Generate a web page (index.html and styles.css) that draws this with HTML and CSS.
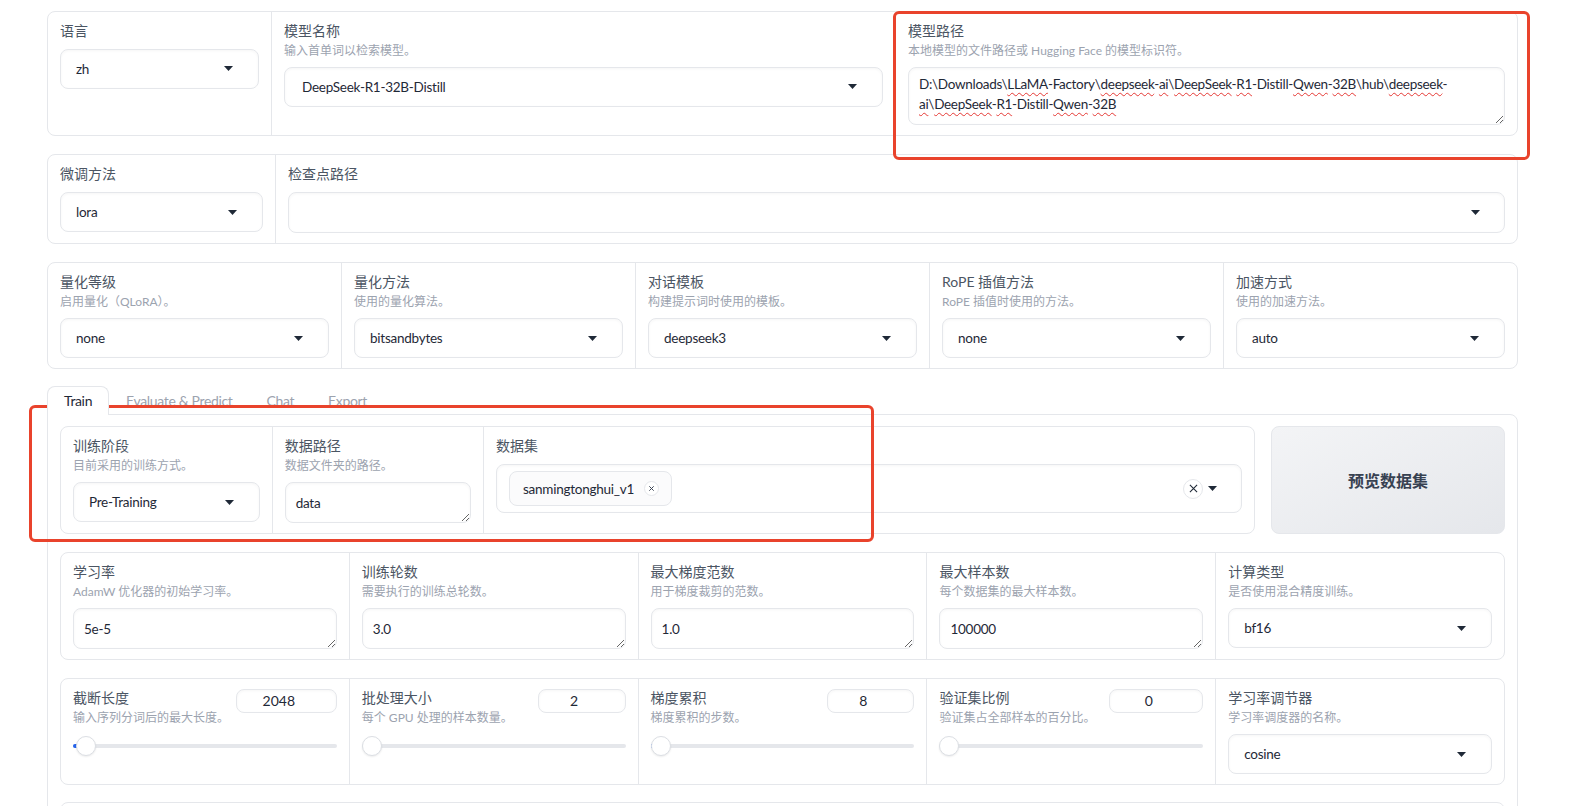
FILE: index.html
```html
<!DOCTYPE html>
<html lang="zh">

<head>
    <meta charset="UTF-8">
    <meta name="viewport" content="width=device-width, initial-scale=1.0">
    <title>LLaMA Board</title>
    <link rel="stylesheet" href="styles.css">
</head>

<body>
    <div class="app">
        <div class="form">
            <div class="field lang">
                <div class="head"><div class="label">语言</div></div>
                <div class="dropdown"><span>zh</span><svg class="caret" viewBox="0 0 9 5"><path d="M0 0h9L4.5 5z"/></svg></div>
            </div>
            <div class="field model-name">
                <div class="head">
                    <div class="label">模型名称</div>
                    <div class="info">输入首单词以检索模型。</div>
                </div>
                <div class="dropdown"><span class="filter">DeepSeek-R1-32B-Distill</span><svg class="caret" viewBox="0 0 9 5"><path d="M0 0h9L4.5 5z"/></svg></div>
            </div>
            <div class="field">
                <div class="head">
                    <div class="label">模型路径</div>
                    <div class="info">本地模型的文件路径或 Hugging Face 的模型标识符。</div>
                </div>
                <div class="textbox path">D:\Downloads\<span class="typo">LLaMA</span>-Factory\<span class="typo">deepseek</span>-<span class="typo">ai</span>\<span class="typo">DeepSeek</span>-<span class="typo">R1</span>-Distill-<span class="typo">Qwen</span>-<span class="typo">32B</span>\hub\<span class="typo">deepseek</span>-<br><span class="typo">ai</span>\<span class="typo">DeepSeek</span>-<span class="typo">R1</span>-Distill-<span class="typo">Qwen</span>-<span class="typo">32B</span></div>
            </div>
        </div>

        <div class="form">
            <div class="field finetune">
                <div class="head"><div class="label">微调方法</div></div>
                <div class="dropdown"><span>lora</span><svg class="caret" viewBox="0 0 9 5"><path d="M0 0h9L4.5 5z"/></svg></div>
            </div>
            <div class="field">
                <div class="head"><div class="label">检查点路径</div></div>
                <div class="multiselect empty"><span></span><svg class="caret" viewBox="0 0 9 5"><path d="M0 0h9L4.5 5z"/></svg></div>
            </div>
        </div>

        <div class="form">
            <div class="field">
                <div class="head">
                    <div class="label">量化等级</div>
                    <div class="info">启用量化（QLoRA）。</div>
                </div>
                <div class="dropdown"><span>none</span><svg class="caret" viewBox="0 0 9 5"><path d="M0 0h9L4.5 5z"/></svg></div>
            </div>
            <div class="field">
                <div class="head">
                    <div class="label">量化方法</div>
                    <div class="info">使用的量化算法。</div>
                </div>
                <div class="dropdown"><span>bitsandbytes</span><svg class="caret" viewBox="0 0 9 5"><path d="M0 0h9L4.5 5z"/></svg></div>
            </div>
            <div class="field">
                <div class="head">
                    <div class="label">对话模板</div>
                    <div class="info">构建提示词时使用的模板。</div>
                </div>
                <div class="dropdown"><span>deepseek3</span><svg class="caret" viewBox="0 0 9 5"><path d="M0 0h9L4.5 5z"/></svg></div>
            </div>
            <div class="field">
                <div class="head">
                    <div class="label">RoPE 插值方法</div>
                    <div class="info">RoPE 插值时使用的方法。</div>
                </div>
                <div class="dropdown"><span>none</span><svg class="caret" viewBox="0 0 9 5"><path d="M0 0h9L4.5 5z"/></svg></div>
            </div>
            <div class="field">
                <div class="head">
                    <div class="label">加速方式</div>
                    <div class="info">使用的加速方法。</div>
                </div>
                <div class="dropdown"><span>auto</span><svg class="caret" viewBox="0 0 9 5"><path d="M0 0h9L4.5 5z"/></svg></div>
            </div>
        </div>

        <div class="tabs">
            <div class="tab-nav">
                <button class="tab selected">Train</button>
                <button class="tab">Evaluate &amp; Predict</button>
                <button class="tab">Chat</button>
                <button class="tab">Export</button>
            </div>
            <div class="tab-panel">
                <div class="row">
                    <div class="form grow">
                        <div class="field stage">
                            <div class="head">
                                <div class="label">训练阶段</div>
                                <div class="info">目前采用的训练方式。</div>
                            </div>
                            <div class="dropdown"><span>Pre-Training</span><svg class="caret" viewBox="0 0 9 5"><path d="M0 0h9L4.5 5z"/></svg></div>
                        </div>
                        <div class="field data-dir">
                            <div class="head">
                                <div class="label">数据路径</div>
                                <div class="info">数据文件夹的路径。</div>
                            </div>
                            <textarea class="textbox" rows="1">data</textarea>
                        </div>
                        <div class="field">
                            <div class="head"><div class="label">数据集</div></div>
                            <div class="multiselect">
                                <div class="chip">
                                    <span>sanmingtonghui_v1</span>
                                    <span class="chip-remove"><svg viewBox="0 0 8 8"><path d="M1.5 1.5l5 5M6.5 1.5l-5 5"/></svg></span>
                                </div>
                                <div class="ms-actions">
                                    <span class="clear"><svg viewBox="0 0 10 10"><path d="M1 1l8 8M9 1l-8 8"/></svg></span>
                                    <svg class="caret" viewBox="0 0 9 5"><path d="M0 0h9L4.5 5z"/></svg>
                                </div>
                            </div>
                        </div>
                    </div>
                    <button class="preview">预览数据集</button>
                </div>

                <div class="form">
                    <div class="field">
                        <div class="head">
                            <div class="label">学习率</div>
                            <div class="info">AdamW 优化器的初始学习率。</div>
                        </div>
                        <textarea class="textbox" rows="1">5e-5</textarea>
                    </div>
                    <div class="field">
                        <div class="head">
                            <div class="label">训练轮数</div>
                            <div class="info">需要执行的训练总轮数。</div>
                        </div>
                        <textarea class="textbox" rows="1">3.0</textarea>
                    </div>
                    <div class="field">
                        <div class="head">
                            <div class="label">最大梯度范数</div>
                            <div class="info">用于梯度裁剪的范数。</div>
                        </div>
                        <textarea class="textbox" rows="1">1.0</textarea>
                    </div>
                    <div class="field">
                        <div class="head">
                            <div class="label">最大样本数</div>
                            <div class="info">每个数据集的最大样本数。</div>
                        </div>
                        <textarea class="textbox" rows="1">100000</textarea>
                    </div>
                    <div class="field">
                        <div class="head">
                            <div class="label">计算类型</div>
                            <div class="info">是否使用混合精度训练。</div>
                        </div>
                        <div class="dropdown"><span>bf16</span><svg class="caret" viewBox="0 0 9 5"><path d="M0 0h9L4.5 5z"/></svg></div>
                    </div>
                </div>

                <div class="form">
                    <div class="field">
                        <div class="slider-head">
                            <div class="head">
                                <div class="label">截断长度</div>
                                <div class="info">输入序列分词后的最大长度。</div>
                            </div>
                            <input class="num num-cutoff" type="number" value="2048">
                        </div>
                        <div class="track"><div class="fill" style="width: 4px"></div><div class="thumb" style="left: 3px"></div></div>
                    </div>
                    <div class="field">
                        <div class="slider-head">
                            <div class="head">
                                <div class="label">批处理大小</div>
                                <div class="info">每个 GPU 处理的样本数量。</div>
                            </div>
                            <input class="num num-batch" type="number" value="2">
                        </div>
                        <div class="track"><div class="fill" style="width: 0px"></div><div class="thumb" style="left: 0px"></div></div>
                    </div>
                    <div class="field">
                        <div class="slider-head">
                            <div class="head">
                                <div class="label">梯度累积</div>
                                <div class="info">梯度累积的步数。</div>
                            </div>
                            <input class="num num-accum" type="number" value="8">
                        </div>
                        <div class="track"><div class="fill" style="width: 1px"></div><div class="thumb" style="left: 0.5px"></div></div>
                    </div>
                    <div class="field">
                        <div class="slider-head">
                            <div class="head">
                                <div class="label">验证集比例</div>
                                <div class="info">验证集占全部样本的百分比。</div>
                            </div>
                            <input class="num num-val" type="number" value="0">
                        </div>
                        <div class="track"><div class="fill" style="width: 0px"></div><div class="thumb" style="left: 0px"></div></div>
                    </div>
                    <div class="field">
                        <div class="head">
                            <div class="label">学习率调节器</div>
                            <div class="info">学习率调度器的名称。</div>
                        </div>
                        <div class="dropdown"><span>cosine</span><svg class="caret" viewBox="0 0 9 5"><path d="M0 0h9L4.5 5z"/></svg></div>
                    </div>
                </div>

                <div class="form more"></div>
            </div>
        </div>
    </div>

    <div class="mark mark-path"></div>
    <div class="mark mark-data"></div>
</body>

</html>
```

FILE: styles.css
```css
*,
*::before,
*::after {
    box-sizing: border-box;
}

html,
body {
    margin: 0;
    height: 806px;
    overflow: hidden;
}

body {
    position: relative;
    font-family: Lato, "Noto Sans CJK SC", sans-serif;
    color: #1f2937;
    background-color: #fff;
}

.app {
    width: 1471px;
    margin: 10.5px 0 0 47px;
    display: flex;
    flex-direction: column;
    gap: 17.5px;
}

/* grouped form blocks */
.form {
    display: flex;
    border: 1px solid #e5e7eb;
    border-radius: 8px;
    background-color: #fff;
}

.field {
    flex: 1 1 0;
    min-width: 0;
    padding: 9px 12px 10px;
}

.field + .field {
    border-left: 1px solid #e5e7eb;
}

.field.lang {
    flex: 0 0 223px;
}

.field.model-name {
    flex: 0 0 624px;
}

.field.finetune {
    flex: 0 0 227px;
}

.field.stage {
    flex: 0 0 210.7px;
}

.field.data-dir {
    flex: 0 0 211.3px;
}

.head {
    margin-bottom: 8.5px;
}

.label {
    font-size: 14px;
    line-height: 20px;
    color: #4b5563;
}

.info {
    padding-top: 1.5px;
    margin-bottom: -1.5px;
    font-size: 12px;
    line-height: 18px;
    color: #9ca3af;
}

/* inputs */
.dropdown,
.multiselect {
    display: flex;
    align-items: center;
    justify-content: space-between;
    height: 39.5px;
    padding: 0 25px 0 15px;
    border: 1px solid #e5e7eb;
    border-radius: 8px;
    font-size: 13.5px;
    letter-spacing: -0.25px;
    box-shadow: inset 0 1px 3px rgba(0, 0, 0, 0.04);
}

.dropdown .filter {
    padding-left: 2px;
}

.caret {
    width: 9px;
    height: 5px;
    fill: #1f2937;
    flex: none;
}

.multiselect {
    height: 48.4px;
    padding: 0 24px 0 12px;
}

.multiselect.empty {
    height: 41px;
}

.chip {
    display: flex;
    align-items: center;
    gap: 10px;
    height: 34.3px;
    padding: 0 12px 0 13px;
    border: 1px solid #e5e7eb;
    border-radius: 8px;
    background-color: #fbfbfc;
}

.chip-remove {
    display: flex;
    align-items: center;
    justify-content: center;
    width: 15px;
    height: 15px;
    border: 1px solid #e5e7eb;
    border-radius: 50%;
    background-color: #fff;
}

.chip-remove svg {
    width: 7px;
    height: 7px;
    stroke: #374151;
    stroke-width: 1.1;
}

.ms-actions {
    display: flex;
    align-items: center;
    gap: 5px;
}

.clear {
    display: flex;
    align-items: center;
    justify-content: center;
    width: 20px;
    height: 20px;
    border: 1px solid #e5e7eb;
    border-radius: 50%;
}

.clear svg {
    width: 9px;
    height: 9px;
    stroke: #1f2937;
    stroke-width: 1.2;
}

.textbox {
    display: block;
    width: 100%;
    height: 41px;
    margin: 0;
    padding: 10px 10px;
    border: 1px solid #e5e7eb;
    border-radius: 8px;
    font-family: inherit;
    font-size: 13.5px;
    letter-spacing: -0.25px;
    line-height: 20px;
    color: #1f2937;
    background-color: #fff;
    box-shadow: inset 0 1px 3px rgba(0, 0, 0, 0.04);
    resize: vertical;
    overflow: hidden;
    outline: none;
}

.textbox.path {
    height: 58.4px;
    padding: 7px 10px;
    line-height: 19.5px;
    letter-spacing: -0.3px;
    white-space: nowrap;
}

.typo {
    text-decoration: underline wavy #e53935;
    text-decoration-thickness: 1px;
    text-underline-offset: 3px;
}

/* tabs */
.tabs {
    display: flex;
    flex-direction: column;
}

.tab-nav {
    display: flex;
}

.tab {
    margin: 0 0 -1px;
    padding: 0 16px;
    border: 1px solid transparent;
    border-bottom: none;
    border-radius: 8px 8px 0 0;
    background: none;
    font-family: inherit;
    font-size: 14px;
    letter-spacing: -0.35px;
    line-height: 28px;
    color: #9ca3af;
}

.tab.selected {
    position: relative;
    z-index: 1;
    border-color: #e5e7eb;
    background-color: #fff;
    color: #1f2937;
}

.tab-panel {
    display: flex;
    flex-direction: column;
    gap: 17.5px;
    padding: 10.5px 12px;
    border: 1px solid #e5e7eb;
    border-radius: 0 8px 8px 8px;
}

.row {
    display: flex;
    gap: 16px;
}

.form.grow {
    flex: 1;
}

.preview {
    flex: 0 0 234px;
    border: 1px solid #e5e7eb;
    border-radius: 8px;
    background: linear-gradient(to bottom right, #f3f4f6, #e5e7eb);
    font-family: inherit;
    font-size: 16px;
    font-weight: 700;
    color: #374151;
}

/* sliders */
.slider-head {
    display: flex;
    justify-content: space-between;
    align-items: flex-start;
}

.slider-head .head {
    margin-bottom: 0;
}

.num {
    height: 24px;
    margin-top: 1px;
    padding: 0 4px;
    border: 1px solid #e5e7eb;
    border-radius: 8px;
    font-family: inherit;
    font-size: 14px;
    text-align: center;
    color: #1f2937;
    box-shadow: inset 0 1px 3px rgba(0, 0, 0, 0.04);
    outline: none;
}

.num-cutoff {
    width: 101px;
}

.num-batch {
    width: 88px;
}

.num-accum {
    width: 87px;
}

.num-val {
    width: 94px;
}

.track {
    position: relative;
    height: 20px;
    margin-top: 10.4px;
}

.track::before {
    content: "";
    position: absolute;
    left: 0;
    right: 0;
    top: 8px;
    height: 4px;
    border-radius: 2px;
    background-color: #e5e7eb;
}

.fill {
    position: absolute;
    left: 0;
    top: 8px;
    height: 4px;
    border-radius: 2px 0 0 2px;
    background-color: #2563eb;
}

.thumb {
    position: absolute;
    top: 0;
    width: 20px;
    height: 20px;
    border: 1px solid #dcdfe4;
    border-radius: 50%;
    background-color: #fff;
    box-shadow: 0 1px 2px rgba(0, 0, 0, 0.08);
}

.form.more {
    height: 80px;
}

/* annotation boxes drawn over the screenshot */
.mark {
    position: absolute;
    border: 3.5px solid #e9432c;
    border-radius: 6px;
    pointer-events: none;
}

.mark-path {
    left: 892.5px;
    top: 11px;
    width: 637.5px;
    height: 149px;
}

.mark-data {
    left: 29px;
    top: 404.5px;
    width: 845px;
    height: 137.5px;
}
```
